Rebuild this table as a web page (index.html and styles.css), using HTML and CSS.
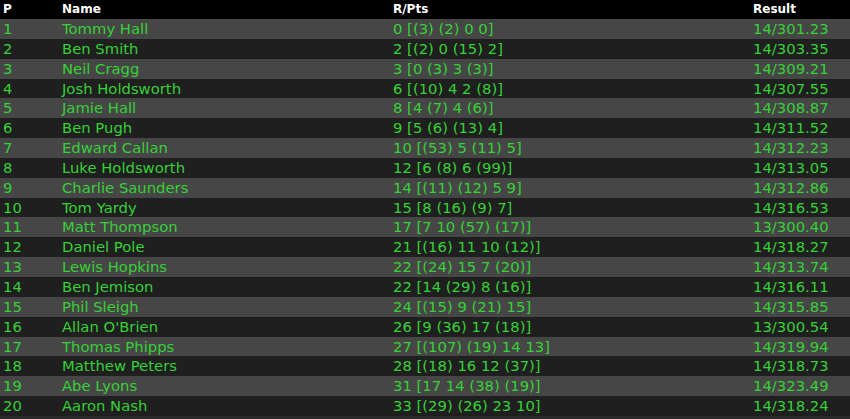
FILE: index.html
```html
<!DOCTYPE html>
<html lang="en">
<head>
  <meta charset="UTF-8" />
  <title>Results</title>
  <link rel="stylesheet" href="styles.css">
</head>
<body>
  <table class="results">
    <thead>
      <tr>
        <th class="col-pos">P</th>
        <th class="col-name">Name</th>
        <th class="col-pts">R/Pts</th>
        <th class="col-res">Result</th>
      </tr>
    </thead>
    <tbody>
      <tr><td>1</td><td>Tommy Hall</td><td>0 [(3) (2) 0 0]</td><td>14/301.23</td></tr>
      <tr><td>2</td><td>Ben Smith</td><td>2 [(2) 0 (15) 2]</td><td>14/303.35</td></tr>
      <tr><td>3</td><td>Neil Cragg</td><td>3 [0 (3) 3 (3)]</td><td>14/309.21</td></tr>
      <tr><td>4</td><td>Josh Holdsworth</td><td>6 [(10) 4 2 (8)]</td><td>14/307.55</td></tr>
      <tr><td>5</td><td>Jamie Hall</td><td>8 [4 (7) 4 (6)]</td><td>14/308.87</td></tr>
      <tr><td>6</td><td>Ben Pugh</td><td>9 [5 (6) (13) 4]</td><td>14/311.52</td></tr>
      <tr><td>7</td><td>Edward Callan</td><td>10 [(53) 5 (11) 5]</td><td>14/312.23</td></tr>
      <tr><td>8</td><td>Luke Holdsworth</td><td>12 [6 (8) 6 (99)]</td><td>14/313.05</td></tr>
      <tr><td>9</td><td>Charlie Saunders</td><td>14 [(11) (12) 5 9]</td><td>14/312.86</td></tr>
      <tr><td>10</td><td>Tom Yardy</td><td>15 [8 (16) (9) 7]</td><td>14/316.53</td></tr>
      <tr><td>11</td><td>Matt Thompson</td><td>17 [7 10 (57) (17)]</td><td>13/300.40</td></tr>
      <tr><td>12</td><td>Daniel Pole</td><td>21 [(16) 11 10 (12)]</td><td>14/318.27</td></tr>
      <tr><td>13</td><td>Lewis Hopkins</td><td>22 [(24) 15 7 (20)]</td><td>14/313.74</td></tr>
      <tr><td>14</td><td>Ben Jemison</td><td>22 [14 (29) 8 (16)]</td><td>14/316.11</td></tr>
      <tr><td>15</td><td>Phil Sleigh</td><td>24 [(15) 9 (21) 15]</td><td>14/315.85</td></tr>
      <tr><td>16</td><td>Allan O'Brien</td><td>26 [9 (36) 17 (18)]</td><td>13/300.54</td></tr>
      <tr><td>17</td><td>Thomas Phipps</td><td>27 [(107) (19) 14 13]</td><td>14/319.94</td></tr>
      <tr><td>18</td><td>Matthew Peters</td><td>28 [(18) 16 12 (37)]</td><td>14/318.73</td></tr>
      <tr><td>19</td><td>Abe Lyons</td><td>31 [17 14 (38) (19)]</td><td>14/323.49</td></tr>
      <tr><td>20</td><td>Aaron Nash</td><td>33 [(29) (26) 23 10]</td><td>14/318.24</td></tr>
    </tbody>
  </table>
</body>
</html>
```

FILE: styles.css
```css
html, body {
  margin: 0;
  padding: 0;
  background: #2b2b2b;
  font-family: 'DejaVu Sans', Verdana, sans-serif;
}

.results {
  width: 850px;
  border-collapse: collapse;
  table-layout: fixed;
}

.results th {
  height: 19px;
  padding: 0 3px;
  background: #000;
  color: #fff;
  font-size: 12px;
  font-weight: bold;
  line-height: 19px;
  text-align: left;
}

.results td {
  height: 18.85px;
  padding: 1px 3px 0;
  color: #36d136;
  font-size: 14.8px;
  line-height: 18.85px;
  white-space: nowrap;
}

.results tbody tr:nth-child(odd) {
  background: #464646;
}

.results tbody tr:nth-child(even) {
  background: #1f1f1f;
}

.col-pos { width: 53px; }
.col-name { width: 325px; }
.col-pts { width: 354px; }
.col-res { width: auto; }
```
